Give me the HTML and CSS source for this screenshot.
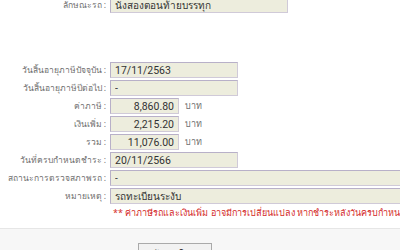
FILE: index.html
```html
<!DOCTYPE html>
<html>
<head>
  <title>ผลการคำนวณภาษีรถ</title>
  <link rel="stylesheet" href="styles.css">
  <meta name="viewport" content="width=device-width, initial-scale=1.0">
</head>
<body>
  <div class="result">
    <div class="row top-row">
      <label class="label">ลักษณะรถ :</label>
      <input type="text" class="field field-type" value="นั่งสองตอนท้ายบรรทุก" readonly>
    </div>

    <div class="spacer"></div>

    <div class="row">
      <label class="label">วันสิ้นอายุภาษีปัจจุบัน :</label>
      <input type="text" class="field field-date" value="17/11/2563" readonly>
    </div>
    <div class="row">
      <label class="label">วันสิ้นอายุภาษีปีต่อไป :</label>
      <input type="text" class="field field-date" value="-" readonly>
    </div>
    <div class="row">
      <label class="label">ค่าภาษี :</label>
      <input type="text" class="field field-money" value="8,860.80" readonly>
      <span class="unit">บาท</span>
    </div>
    <div class="row">
      <label class="label">เงินเพิ่ม :</label>
      <input type="text" class="field field-money" value="2,215.20" readonly>
      <span class="unit">บาท</span>
    </div>
    <div class="row">
      <label class="label">รวม :</label>
      <input type="text" class="field field-money" value="11,076.00" readonly>
      <span class="unit">บาท</span>
    </div>
    <div class="row">
      <label class="label">วันที่ครบกำหนดชำระ :</label>
      <input type="text" class="field field-date" value="20/11/2566" readonly>
    </div>
    <div class="row">
      <label class="label">สถานะการตรวจสภาพรถ :</label>
      <input type="text" class="field field-wide" value="-" readonly>
    </div>
    <div class="row">
      <label class="label">หมายเหตุ :</label>
      <input type="text" class="field field-wide" value="รถทะเบียนระงับ" readonly>
    </div>
    <div class="note">** ค่าภาษีรถและเงินเพิ่ม อาจมีการเปลี่ยนแปลง หากชำระหลังวันครบกำหนดชำระ</div>
  </div>

  <div class="footer">
    <button type="button" class="btn">ค้นหาใหม่</button>
  </div>
</body>
</html>
```

FILE: styles.css
```css
body {
  margin: 0;
  background-color: #ffffff;
  font-family: Tahoma, "Noto Sans", "DejaVu Sans", sans-serif;
  font-size: 11px;
  color: #555555;
  overflow: hidden;
}
.result {
  margin-top: -3px;
  width: 400px;
  overflow: hidden;
}
.row {
  display: flex;
  align-items: center;
  height: 16px;
  margin-bottom: 2px;
}
.spacer {
  height: 47px;
}
.label {
  width: 106px;
  flex: none;
  text-align: right;
  padding-right: 4px;
  white-space: nowrap;
  font-size: 8.5px;
  color: #707070;
}
.field {
  box-sizing: border-box;
  height: 16px;
  margin: 0;
  padding: 0 4px;
  border: 1px solid #b8b0c8;
  border-bottom-color: #d0cad8;
  border-right-color: #d0cad8;
  background-color: #ededdd;
  font-family: Roboto, "Noto Sans", sans-serif;
  font-size: 10.5px;
  color: #333333;
  flex: none;
}
.field-type {
  width: 178px;
  font-size: 10px;
}
.field-date {
  width: 128px;
}
.field-money {
  width: 69px;
  text-align: right;
}
.field-wide {
  width: 420px;
  font-size: 10px;
}
.unit {
  margin-left: 6px;
  font-size: 9px;
  color: #707070;
}
.note {
  margin: 2px 0 0 113px;
  font-size: 9px;
  color: #d42a2a;
  white-space: nowrap;
}
.footer {
  margin-top: 8px;
  border-top: 1px solid #e6e6e6;
  background-color: #f7f7f7;
  height: 40px;
  padding: 14px 0 0 138px;
}
.btn {
  width: 74px;
  height: 22px;
  border: 1px solid #aaaaaa;
  background-color: #f2f2f2;
  font-family: Tahoma, "Noto Sans", sans-serif;
  font-size: 10px;
  color: #333333;
}
```
